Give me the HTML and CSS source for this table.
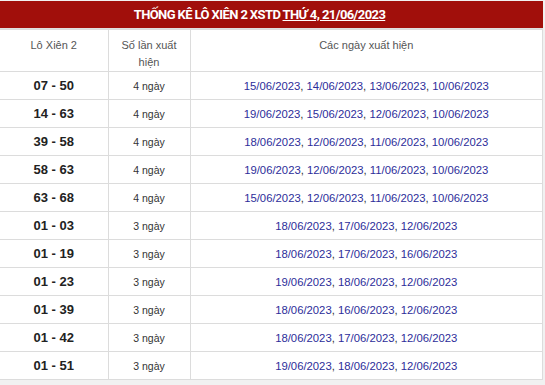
FILE: index.html
```html
<!DOCTYPE html>
<html lang="vi">
<head>
  <meta charset="UTF-8">
  <meta name="viewport" content="width=device-width, initial-scale=1">
  <title>Thống kê lô xiên 2 XSTD</title>
  <link rel="stylesheet" href="styles.css">
</head>
<body>

  <div class="box">
    <h2 class="box-title">THỐNG KÊ LÔ XIÊN 2 XSTD <a href="#">THỨ 4, 21/06/2023</a></h2>

    <table class="stats">
      <thead>
        <tr>
          <th class="col-pair">Lô Xiên 2</th>
          <th class="col-count">Số lần xuất<br>hiện</th>
          <th>Các ngày xuất hiện</th>
        </tr>
      </thead>
      <tbody>
        <tr><td class="pair">07 - 50</td><td class="count">4 ngày</td><td class="dates"><a href="#">15/06/2023</a>, <a href="#">14/06/2023</a>, <a href="#">13/06/2023</a>, <a href="#">10/06/2023</a></td></tr>
        <tr><td class="pair">14 - 63</td><td class="count">4 ngày</td><td class="dates"><a href="#">19/06/2023</a>, <a href="#">15/06/2023</a>, <a href="#">12/06/2023</a>, <a href="#">10/06/2023</a></td></tr>
        <tr><td class="pair">39 - 58</td><td class="count">4 ngày</td><td class="dates"><a href="#">18/06/2023</a>, <a href="#">12/06/2023</a>, <a href="#">11/06/2023</a>, <a href="#">10/06/2023</a></td></tr>
        <tr><td class="pair">58 - 63</td><td class="count">4 ngày</td><td class="dates"><a href="#">19/06/2023</a>, <a href="#">12/06/2023</a>, <a href="#">11/06/2023</a>, <a href="#">10/06/2023</a></td></tr>
        <tr><td class="pair">63 - 68</td><td class="count">4 ngày</td><td class="dates"><a href="#">15/06/2023</a>, <a href="#">12/06/2023</a>, <a href="#">11/06/2023</a>, <a href="#">10/06/2023</a></td></tr>
        <tr><td class="pair">01 - 03</td><td class="count">3 ngày</td><td class="dates"><a href="#">18/06/2023</a>, <a href="#">17/06/2023</a>, <a href="#">12/06/2023</a></td></tr>
        <tr><td class="pair">01 - 19</td><td class="count">3 ngày</td><td class="dates"><a href="#">18/06/2023</a>, <a href="#">17/06/2023</a>, <a href="#">16/06/2023</a></td></tr>
        <tr><td class="pair">01 - 23</td><td class="count">3 ngày</td><td class="dates"><a href="#">19/06/2023</a>, <a href="#">18/06/2023</a>, <a href="#">12/06/2023</a></td></tr>
        <tr><td class="pair">01 - 39</td><td class="count">3 ngày</td><td class="dates"><a href="#">18/06/2023</a>, <a href="#">16/06/2023</a>, <a href="#">12/06/2023</a></td></tr>
        <tr><td class="pair">01 - 42</td><td class="count">3 ngày</td><td class="dates"><a href="#">18/06/2023</a>, <a href="#">17/06/2023</a>, <a href="#">12/06/2023</a></td></tr>
        <tr><td class="pair">01 - 51</td><td class="count">3 ngày</td><td class="dates"><a href="#">19/06/2023</a>, <a href="#">18/06/2023</a>, <a href="#">12/06/2023</a></td></tr>
      </tbody>
    </table>
  </div>

</body>
</html>
```

FILE: styles.css
```css
body {
  font-family: "Liberation Sans", Arial, sans-serif;
  background: #f1f1f1;
  margin: 0;
  padding: 1px 0 0 0;
}
.box {
  width: 543px;
  background: #fff;
}
.box-title {
  margin: 0;
  height: 27px;
  line-height: 27px;
  padding-right: 24px;
  background: #a10f0b;
  color: #fff;
  text-align: center;
  font-family: Roboto, "Liberation Sans", sans-serif;
  font-size: 13px;
  font-weight: bold;
  letter-spacing: -0.6px;
  border-bottom: 1px solid #e0e0e0;
}
.box-title a {
  color: #fff;
  text-decoration: underline;
}
.stats {
  width: 100%;
  border-collapse: collapse;
  table-layout: fixed;
}
.stats th,
.stats td {
  border: 1px solid #dcdcdc;
  text-align: center;
  padding: 0;
}
.stats tr > :first-child {
  border-left: none;
}
.stats th {
  height: 40px;
  vertical-align: top;
  padding-top: 7px;
  box-sizing: border-box;
  font-weight: normal;
  font-size: 11px;
  line-height: 17px;
  color: #555;
}
.stats .col-pair {
  width: 108px;
}
.stats .col-count {
  width: 82px;
}
.stats td {
  height: 27px;
}
.pair {
  font-weight: bold;
  font-size: 13px;
  color: #222;
}
.count {
  font-size: 10.5px;
  color: #333;
}
.dates {
  font-size: 11.3px;
  color: #333;
}
.dates a {
  color: #2d2d9a;
  text-decoration: none;
}
```
